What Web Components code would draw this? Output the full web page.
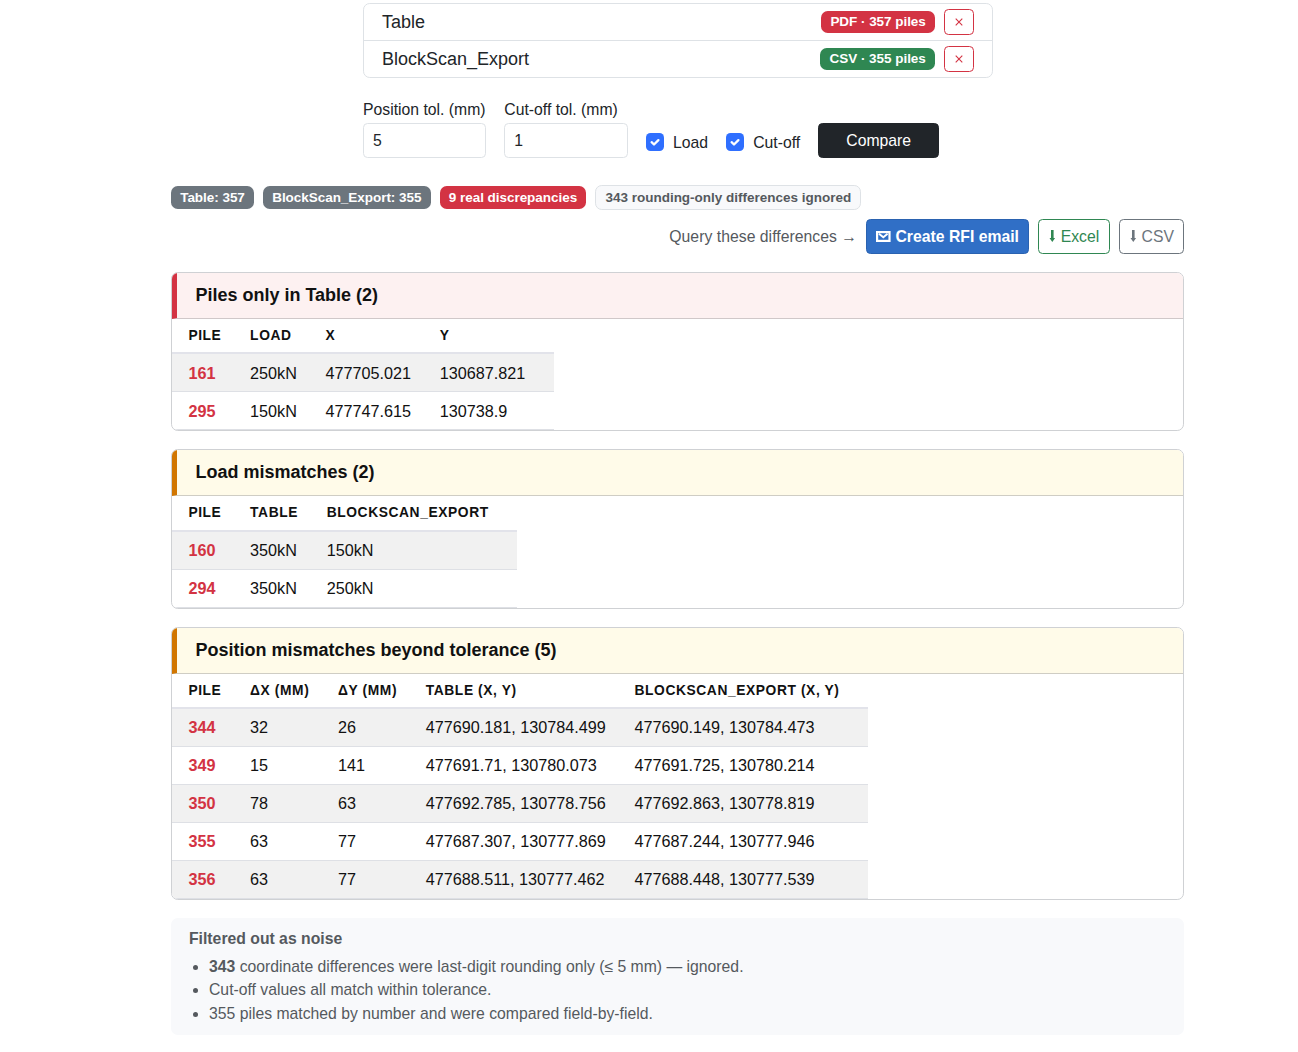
<!DOCTYPE html>
<html lang="en">
<head>
<meta charset="utf-8">
<title>Pile schedule comparison</title>
<style>
  html { font-size: 18px; }
  body {
    margin: 0;
    background: #fff;
    color: #212529;
    font-family: "Liberation Sans", Arial, sans-serif;
    line-height: 1.5;
  }
</style>
</head>
<body>
<pile-compare></pile-compare>

<script>
class SourceRow extends HTMLElement {
  constructor() {
    super();
    this.attachShadow({ mode: 'open' });
    this.shadowRoot.innerHTML = `
      <style>
        :host { display: flex; align-items: center; gap: 9px; height: 36px; padding: 0 18px; }
        .name { flex: 1; }
        button {
          box-sizing: border-box; width: 30px; height: 26px; padding: 0;
          display: flex; align-items: center; justify-content: center;
          border: 1px solid #d33343; border-radius: 4.5px; background: #fff;
        }
      </style>
      <span class="name"><slot></slot></span>
      <status-badge></status-badge>
      <button aria-label="Remove"><svg width="8" height="8" viewBox="0 0 8 8"><path d="M.7.7l6.6 6.6M7.3.7L.7 7.3" stroke="#d33343" stroke-width="1.1"/></svg></button>
    `;
  }
  connectedCallback() {
    const badge = this.shadowRoot.querySelector('status-badge');
    badge.setAttribute('tone', this.getAttribute('tone'));
    badge.textContent = this.getAttribute('badge');
  }
}

class StatusBadge extends HTMLElement {
  constructor() {
    super();
    this.attachShadow({ mode: 'open' });
    this.shadowRoot.innerHTML = `
      <style>
        :host {
          display: inline-block; padding: 4.725px 9.2px; border-radius: 6.75px;
          font-size: 13.5px; font-weight: 700; line-height: 1; white-space: nowrap;
          letter-spacing: -.04px; color: #fff; background: #6c757d;
        }
        :host([tone="red"]) { background: #d33343; }
        :host([tone="green"]) { background: #2f8752; }
        :host([tone="light"]) { background: #f8f9fb; color: #55595e; border: 1px solid #dee2e6; letter-spacing: -.01px; }
      </style>
      <slot></slot>
    `;
  }
}

class NumberField extends HTMLElement {
  constructor() {
    super();
    this.attachShadow({ mode: 'open' });
    this.shadowRoot.innerHTML = `
      <style>
        :host { display: block; width: 123.3px; font-size: 15.75px; }
        label { display: block; white-space: nowrap; margin-bottom: 1.8px; }
        input {
          display: block; box-sizing: border-box; width: 100%; height: 35px;
          padding: 1px 9px 0; border: 1px solid #dee2e6; border-radius: 4.5px;
          font: inherit; color: inherit; background: #fff;
        }
      </style>
      <label for="value"><slot></slot></label>
      <input id="value">
    `;
  }
  connectedCallback() {
    this.shadowRoot.querySelector('input').value = this.getAttribute('value');
  }
}

class CheckOption extends HTMLElement {
  constructor() {
    super();
    this.attachShadow({ mode: 'open' });
    this.shadowRoot.innerHTML = `
      <style>
        :host { display: flex; align-items: center; gap: 9.4px; font-size: 15.75px; margin: 0 -.2px 3.9px 0; }
        svg { display: block; }
        span { padding-top: 1px; }
      </style>
      <svg width="18" height="18" viewBox="0 0 18 18">
        <rect width="18" height="18" rx="4.5" fill="#2f6fff"/>
        <path d="M5.6 9.2l2.4 2.3 4.4-4.4" fill="none" stroke="#fff" stroke-width="2.3" stroke-linecap="round" stroke-linejoin="round"/>
      </svg>
      <span><slot></slot></span>
    `;
  }
}

class ActionButton extends HTMLElement {
  constructor() {
    super();
    this.attachShadow({ mode: 'open' });
    this.shadowRoot.innerHTML = `
      <style>
        :host { display: block; }
        button {
          display: flex; align-items: center; box-sizing: border-box; height: 35px;
          padding: 0 9px; border: 1px solid; border-radius: 4.5px; white-space: nowrap;
          font-family: inherit; font-size: 15.75px; line-height: 1.5; background: #fff;
        }
        :host([kind="dark"]) button { background: #212529; border-color: #212529; color: #fff; padding: 0 27.3px; }
        :host([kind="primary"]) button { background: #306fc6; border-color: #2a62b0; color: #fff; font-weight: 700; }
        :host([kind="green"]) button { color: #2f8752; border-color: #2f8752; padding-right: 9.6px; }
        :host([kind="grey"]) button { color: #6c757d; border-color: #6c757d; }
      </style>
      <button><slot name="icon"></slot><slot></slot></button>
    `;
  }
}

class DiffCard extends HTMLElement {
  constructor() {
    super();
    this.attachShadow({ mode: 'open' });
  }
  connectedCallback() {
    const data = diffs[this.getAttribute('data')];
    const head = data.columns.map(c => `<th>${c}</th>`).join('');
    const body = data.rows.map(r => `<tr>${r.map(c => `<td>${c}</td>`).join('')}</tr>`).join('');
    this.shadowRoot.innerHTML = `
      <style>
        :host {
          display: block; border: 1px solid #cfd1d4; border-radius: 6.75px;
          overflow: hidden; background: #fff; color: #111;
        }
        h2 {
          margin: 0; padding: 9px 18.4px; font-size: 18px; line-height: 27px; font-weight: 700;
          border-bottom: 1px solid #cfcdc4; border-left: 5px solid #d17600; background: #fffbe9;
        }
        :host([tone="red"]) h2 { background: #fdf1f1; border-left-color: #d33343; border-bottom-color: #d0c8c9; }
        table { border-collapse: separate; border-spacing: 0; }
        th, td { padding: 6.3px 28.7px 6.3px 0; text-align: left; white-space: nowrap; }
        th:first-child, td:first-child { padding-left: 16.4px; }
        th {
          font-size: 13.8px; line-height: 21px; letter-spacing: .59px; text-transform: uppercase;
          border-bottom: 2px solid #e2e3ea;
        }
        td { font-size: 16.2px; border-bottom: 1px solid #dee0e5; }
        td:first-child { font-weight: 700; color: #d33343; }
        tbody tr:nth-child(odd) td { background: #f1f1f1; }
      </style>
      <h2>${data.title}</h2>
      <table><thead><tr>${head}</tr></thead><tbody>${body}</tbody></table>
    `;
  }
}

class NoiseSummary extends HTMLElement {
  constructor() {
    super();
    this.attachShadow({ mode: 'open' });
    this.shadowRoot.innerHTML = `
      <style>
        :host {
          display: block; padding: 9px 18px; border-radius: 6.75px;
          background: #f8f9fb; color: #55595e; font-size: 15.75px;
        }
        .title { font-weight: 700; margin-bottom: 4.5px; }
        ul { margin: 0; padding-left: 20px; }
      </style>
      <div class="title">Filtered out as noise</div>
      <ul>
        <li><b>343</b> coordinate differences were last-digit rounding only (≤ 5 mm) — ignored.</li>
        <li>Cut-off values all match within tolerance.</li>
        <li>355 piles matched by number and were compared field-by-field.</li>
      </ul>
    `;
  }
}

class PileCompare extends HTMLElement {
  constructor() {
    super();
    this.attachShadow({ mode: 'open' });
    this.shadowRoot.innerHTML = `
      <style>
        :host { display: block; width: 1013px; padding: 3px 0 0 171px; }
        .sources { width: 628px; margin-left: 192px; border: 1px solid #dee2e6; border-radius: 6.75px; }
        source-row + source-row { border-top: 1px solid #dee2e6; }
        .options { display: flex; align-items: flex-end; gap: 18px; margin: 19.6px 0 0 192px; }
        .badges { display: flex; align-items: center; gap: 9px; margin-top: 27px; }
        .actions { display: flex; align-items: center; justify-content: flex-end; gap: 9px; margin-top: 9px; }
        .hint { font-size: 15.75px; letter-spacing: .03px; color: #55595e; }
        diff-card, noise-summary { margin-top: 18px; }
        .actions + diff-card { margin-top: 17.8px; }
        svg { display: block; margin-right: 4.4px; }
      </style>
      <div class="sources">
        <source-row tone="red" badge="PDF · 357 piles">Table</source-row>
        <source-row tone="green" badge="CSV · 355 piles">BlockScan_Export</source-row>
      </div>
      <div class="options">
        <number-field value="5">Position tol. (mm)</number-field>
        <number-field value="1">Cut-off tol. (mm)</number-field>
        <check-option>Load</check-option>
        <check-option>Cut-off</check-option>
        <action-button kind="dark">Compare</action-button>
      </div>
      <div class="badges">
        <status-badge>Table: 357</status-badge>
        <status-badge>BlockScan_Export: 355</status-badge>
        <status-badge tone="red">9 real discrepancies</status-badge>
        <status-badge tone="light">343 rounding-only differences ignored</status-badge>
      </div>
      <div class="actions">
        <span class="hint">Query these differences →</span>
        <action-button kind="primary">
          <svg slot="icon" width="15" height="11" viewBox="0 0 15 11">
            <rect x="1.1" y="1.1" width="12.4" height="8.8" fill="none" stroke="#fff" stroke-width="2.2"/>
            <path d="M3 2.8l4.3 3.4 4.3-3.4" fill="none" stroke="#fff" stroke-width="2"/>
          </svg>Create RFI email</action-button>
        <action-button kind="green">
          <svg slot="icon" width="8.4" height="12" viewBox="0 0 8.4 12"><path d="M3 0h2.6v8h1.5L4.3 12 1.5 8H3z" fill="#2f8752"/></svg>Excel</action-button>
        <action-button kind="grey">
          <svg slot="icon" width="8.4" height="12" viewBox="0 0 8.4 12"><path d="M3 0h2.6v8h1.5L4.3 12 1.5 8H3z" fill="#6c757d"/></svg>CSV</action-button>
      </div>
      <diff-card tone="red" data="missing"></diff-card>
      <diff-card data="load"></diff-card>
      <diff-card data="position"></diff-card>
      <noise-summary></noise-summary>
    `;
  }
}

const diffs = {
  missing: {
    title: 'Piles only in Table (2)',
    columns: ['Pile', 'Load', 'X', 'Y'],
    rows: [
      ['161', '250kN', '477705.021', '130687.821'],
      ['295', '150kN', '477747.615', '130738.9']
    ]
  },
  load: {
    title: 'Load mismatches (2)',
    columns: ['Pile', 'Table', 'BlockScan_Export'],
    rows: [
      ['160', '350kN', '150kN'],
      ['294', '350kN', '250kN']
    ]
  },
  position: {
    title: 'Position mismatches beyond tolerance (5)',
    columns: ['Pile', 'ΔX (mm)', 'ΔY (mm)', 'Table (X, Y)', 'BlockScan_Export (X, Y)'],
    rows: [
      ['344', '32', '26', '477690.181, 130784.499', '477690.149, 130784.473'],
      ['349', '15', '141', '477691.71, 130780.073', '477691.725, 130780.214'],
      ['350', '78', '63', '477692.785, 130778.756', '477692.863, 130778.819'],
      ['355', '63', '77', '477687.307, 130777.869', '477687.244, 130777.946'],
      ['356', '63', '77', '477688.511, 130777.462', '477688.448, 130777.539']
    ]
  }
};

customElements.define('status-badge', StatusBadge);
customElements.define('source-row', SourceRow);
customElements.define('number-field', NumberField);
customElements.define('check-option', CheckOption);
customElements.define('action-button', ActionButton);
customElements.define('diff-card', DiffCard);
customElements.define('noise-summary', NoiseSummary);
customElements.define('pile-compare', PileCompare);
</script>
</body>
</html>
